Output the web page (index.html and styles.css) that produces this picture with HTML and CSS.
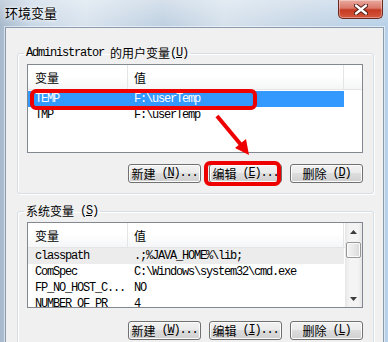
FILE: index.html
```html
<!DOCTYPE html>
<html lang="zh-CN">
<head>
<meta charset="utf-8">
<title>环境变量</title>
<link rel="stylesheet" href="styles.css">
</head>
<body>
<div class="window">
  <div class="titlebar">
    <span class="title">环境变量</span>
    <span class="close">
      <svg width="14" height="11" viewBox="0 0 14 11">
        <path d="M2 1.5 L12 9.5 M12 1.5 L2 9.5" stroke="#4a1810" stroke-width="4.2" stroke-linecap="round"/>
        <path d="M2 1.5 L12 9.5 M12 1.5 L2 9.5" stroke="#ffffff" stroke-width="2.4" stroke-linecap="round"/>
      </svg>
    </span>
  </div>
  <div class="client">
    <fieldset class="group g1">
      <legend>Administrator <span class="zh">的用户变量</span>(<u>U</u>)</legend>
      <div class="listview lv1">
        <div class="lv-main">
          <div class="hdr"><span class="c1 zh">变量</span><span class="c2 zh">值</span><span class="fill"></span></div>
          <div class="row sel"><span class="c1">TEMP</span><span class="c2">F:\userTemp</span></div>
          <div class="row"><span class="c1">TMP</span><span class="c2">F:\userTemp</span></div>
        </div>
      </div>
      <div class="btns">
        <button class="btn"><span class="zh">新建</span>&nbsp;(<u>N</u>)...</button>
        <button class="btn"><span class="zh">编辑</span>&nbsp;(<u>E</u>)...</button>
        <button class="btn"><span class="zh">删除</span>&nbsp;(<u>D</u>)</button>
      </div>
    </fieldset>
    <fieldset class="group g2">
      <legend><span class="zh">系统变量</span>&nbsp;(<u>S</u>)</legend>
      <div class="listview lv2">
        <div class="lv-main">
          <div class="hdr"><span class="c1 zh">变量</span><span class="c2 zh">值</span><span class="fill"></span></div>
          <div class="row hot"><span class="c1">classpath</span><span class="c2">.;%JAVA_HOME%\lib;</span></div>
          <div class="row"><span class="c1">ComSpec</span><span class="c2">C:\Windows\system32\cmd.exe</span></div>
          <div class="row"><span class="c1">FP_NO_HOST_C...</span><span class="c2">NO</span></div>
          <div class="row"><span class="c1">NUMBER_OF_PR</span><span class="c2">4</span></div>
        </div>
        <div class="scrollbar">
          <div class="sb-btn"><svg width="7" height="4" viewBox="0 0 7 4"><polygon points="0,4 7,4 3.5,0" fill="#3c3c3c"/></svg></div>
          <div class="thumb"></div>
          <div class="sb-space"></div>
          <div class="sb-btn"><svg width="7" height="4" viewBox="0 0 7 4"><polygon points="0,0 7,0 3.5,4" fill="#3c3c3c"/></svg></div>
        </div>
      </div>
      <div class="btns">
        <button class="btn"><span class="zh">新建</span>&nbsp;(<u>W</u>)...</button>
        <button class="btn"><span class="zh">编辑</span>&nbsp;(<u>I</u>)...</button>
        <button class="btn"><span class="zh">删除</span>&nbsp;(<u>L</u>)</button>
      </div>
    </fieldset>
  </div>
</div>
<svg class="annot" width="388" height="342" viewBox="0 0 388 342">
  <rect x="32" y="91" width="223" height="17" rx="4" ry="4" fill="none" stroke="#ee0000" stroke-width="4"/>
  <rect x="206" y="163" width="73" height="21" rx="4" ry="4" fill="none" stroke="#ee0000" stroke-width="4"/>
  <line x1="217" y1="116" x2="242" y2="146" stroke="#ee0000" stroke-width="4"/>
  <polygon points="249,155 235,148 246,139" fill="#ee0000"/>
</svg>
</body>
</html>
```

FILE: styles.css
```css
* { box-sizing: border-box; }
html, body { margin: 0; padding: 0; }
body {
  width: 388px;
  height: 342px;
  overflow: hidden;
  position: relative;
  background:
    linear-gradient(180deg, rgba(255,255,255,0.35), rgba(255,255,255,0) 26px),
    linear-gradient(90deg, #a7b9cc 0%, #c8d7e6 8%, #d8e3ee 22%, #bfd0e1 42%, #d5e1ec 58%, #c6d6e6 78%, #b8d1e8 100%);
  font-family: "Liberation Mono", monospace;
  font-size: 12px;
  letter-spacing: -1.2px;
  color: #000;
}
.zh {
  font-family: "Noto Sans CJK SC", sans-serif;
  font-size: 12px;
  letter-spacing: 0;
}
.window { display: flex; flex-direction: column; height: 342px; }
.titlebar {
  height: 27px;
  flex: none;
  display: flex;
  justify-content: space-between;
  align-items: flex-start;
  padding: 0 5px 0 5px;
}
.title {
  font-family: "Noto Sans CJK SC", sans-serif;
  font-size: 13px;
  letter-spacing: 0;
  line-height: 26px;
  text-shadow: 0 0 5px #fff, 0 0 3px #fff;
}
.close {
  width: 45px;
  height: 19px;
  border: 1px solid #6b2a21;
  border-top: none;
  border-radius: 0 0 5px 5px;
  background: linear-gradient(#eaaa9e 0%, #d9786a 45%, #c63a22 55%, #d4583e 100%);
  box-shadow: inset 0 0 0 1px rgba(255,255,255,0.35);
  display: flex;
  align-items: center;
  justify-content: center;
}
.client {
  flex: 1;
  margin: 0 4px 0 5px;
  border: 1px solid #8b9bae;
  border-bottom: none;
  background: #f0f0f0;
  display: flex;
  flex-direction: column;
  box-shadow: 0 0 0 1px rgba(255,255,255,0.5);
}
.group {
  border: 1px solid #d5dfe5;
  border-radius: 3px;
  margin: 18px 9px 0 11px;
  padding: 0 10px 10px 9px;
  min-width: 0;
  box-shadow: inset 1px 1px 0 #fff, 1px 1px 0 #fff;
}
.g2 { margin-top: 10px; }
.group legend {
  padding: 0 2px;
  margin-left: -3px;
  line-height: 14px;
  height: 14px;
}
.group legend .zh { vertical-align: top; line-height: 14px; }
.listview {
  border: 1px solid #828790;
  background: #fff;
  display: flex;
  overflow: hidden;
  margin-top: 4px;
}
.lv1 { height: 89px; }
.lv2 { height: 86px; }
.lv-main { flex: 1; min-width: 0; }
.hdr {
  height: 25px;
  display: flex;
  border-bottom: 1px solid #e5e5e5;
  background: linear-gradient(#ffffff 0%, #ffffff 45%, #f5f6f7 100%);
}
.hdr span { line-height: 22px; padding-top: 2px; }
.c1 { width: 100px; padding-left: 7px; flex: none; overflow: hidden; white-space: nowrap; }
.c2 { width: 216px; padding-left: 6px; flex: none; overflow: hidden; white-space: nowrap; }
.hdr .c1, .hdr .c2 { border-right: 1px solid #e5e5e5; }
.fill { flex: 1; }
.row { width: 316px; height: 16px; line-height: 16px; display: flex; white-space: nowrap; }
.lv1 .row.sel { margin-top: 1px; }
.row.sel { background: #3399ff; color: #fff; }
.row.hot { background: #ececec; }
.scrollbar {
  width: 17px;
  flex: none;
  display: flex;
  flex-direction: column;
  background: linear-gradient(90deg, #e6e6e6, #f4f4f4 25%, #f4f4f4 75%, #e6e6e6);
}
.sb-btn { height: 17px; flex: none; display: flex; align-items: center; justify-content: center; }
.thumb {
  height: 16px;
  margin: 2px 1px 0 1px;
  border: 1px solid #979797;
  border-radius: 2px;
  background: linear-gradient(90deg, #f3f3f3, #e9e9e9 50%, #d9d9d9);
  box-shadow: inset 0 0 0 1px #fbfbfb;
}
.sb-space { flex: 1; }
.btns { display: flex; justify-content: flex-end; gap: 8px; margin-top: 11px; }
.g2 .btns { margin-top: 13px; }
.btn {
  width: 73px;
  height: 19px;
  padding: 0;
  border: 1px solid #707070;
  border-radius: 3px;
  background: linear-gradient(#f2f2f2 0%, #ebebeb 45%, #dddddd 50%, #cfcfcf 100%);
  box-shadow: inset 0 0 0 1px #fcfcfc;
  font-family: "Liberation Mono", monospace;
  font-size: 12px;
  letter-spacing: -1.2px;
  color: #000;
  display: flex;
  align-items: center;
  justify-content: center;
  line-height: 17px;
}
.annot { position: absolute; left: 0; top: 0; pointer-events: none; }
```
